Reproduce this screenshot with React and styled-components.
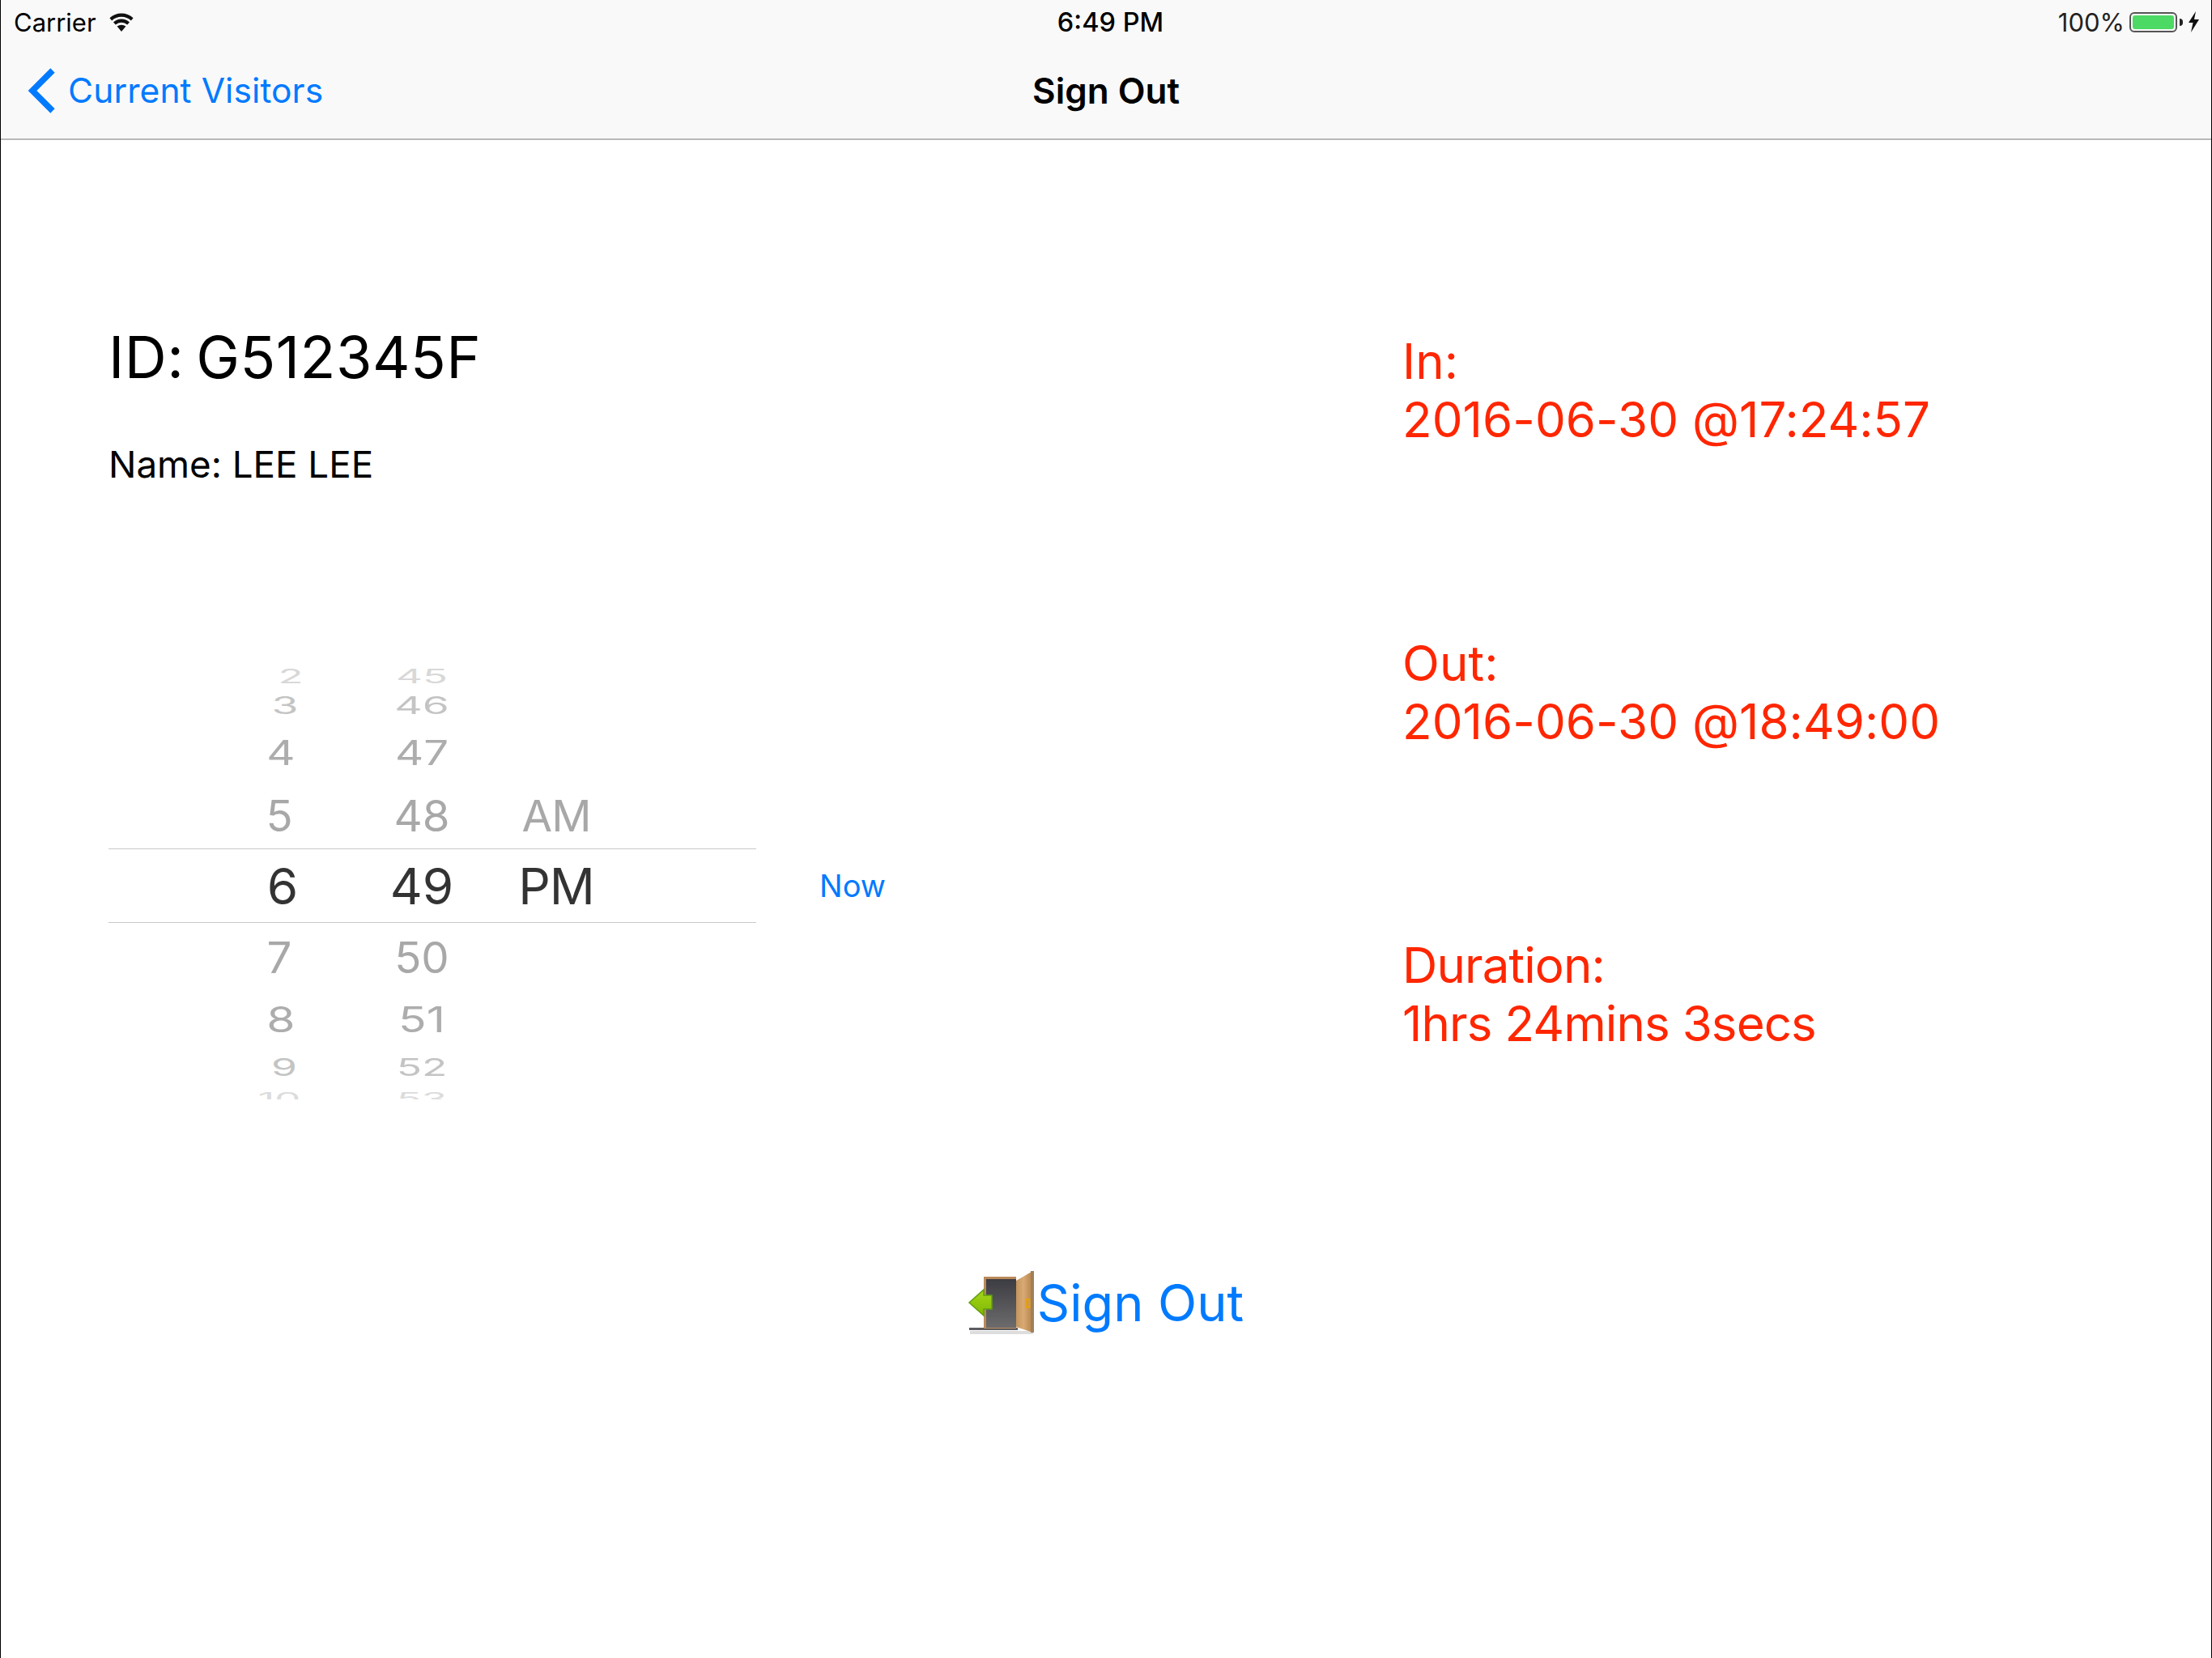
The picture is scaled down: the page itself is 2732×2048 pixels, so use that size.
import styled, { createGlobalStyle } from "styled-components";

const GlobalStyle = createGlobalStyle`
  html, body {
    margin: 0;
    padding: 0;
    background: #fff;
  }
  body {
    font-family: Inter, "Liberation Sans", sans-serif;
    color: #000;
  }
`;

const Screen = styled.div`
  width: 2732px;
  height: 2048px;
  box-sizing: border-box;
  border-left: 1px solid #000;
  border-right: 1px solid #000;
  overflow: hidden;
  background: #fff;
`;

const Header = styled.header`
  height: 171px;
  background: #f9f9f9;
  border-bottom: 2px solid #b8b8b8;
  box-sizing: content-box;
`;

const StatusBar = styled.div`
  height: 54px;
  padding: 0 14px 0 16px;
  display: grid;
  grid-template-columns: 1fr auto 1fr;
  align-items: center;
  font-size: 31px;
`;

const StatusLeft = styled.div`
  display: flex;
  align-items: center;
  gap: 15px;
`;

const StatusTime = styled.div`
  font-weight: 500;
  font-size: 32.5px;
  margin-left: 9px;
`;

const StatusRight = styled.div`
  display: flex;
  justify-content: flex-end;
  align-items: center;
  gap: 6px;
  color: #222;
`;

const Battery = styled.div`
  width: 59px;
  height: 25px;
  margin-right: 7px;
  box-sizing: border-box;
  border: 2px solid #555;
  border-radius: 6px;
  padding: 2px;
  position: relative;

  &::before {
    content: "";
    display: block;
    height: 100%;
    border-radius: 3px;
    background: #4cd964;
  }

  &::after {
    content: "";
    position: absolute;
    right: -9px;
    top: 6px;
    width: 4px;
    height: 9px;
    border-radius: 0 4px 4px 0;
    background: #222;
  }
`;

const NavBar = styled.nav`
  height: 115px;
  padding: 0 32px;
  display: grid;
  grid-template-columns: 1fr auto 1fr;
  align-items: center;
  font-size: 42.5px;
`;

const BackLink = styled.a`
  display: flex;
  align-items: center;
  gap: 15px;
  color: #007aff;
  letter-spacing: 0.1px;
`;

const NavTitle = styled.div`
  font-size: 44px;
  font-weight: 600;
`;

const Main = styled.main`
  display: grid;
  grid-template-columns: 1598px 1fr;
  padding-left: 133px;
`;

const LeftColumn = styled.section`
  padding-top: 228px;
`;

const IdLine = styled.h1`
  margin: 0;
  font-size: 72px;
  line-height: 80px;
  font-weight: 400;
  letter-spacing: 0.5px;
  word-spacing: -6px;
`;

const NameLine = styled.p`
  margin: 63px 0 0;
  font-size: 45.7px;
  line-height: 60px;
`;

const PickerRow = styled.div`
  display: flex;
  align-items: center;
  gap: 78px;
  margin-top: 222px;
`;

const Wheel = styled.div`
  width: 800px;
  height: 536px;
  overflow: hidden;
`;

const WheelRow = styled.div`
  height: ${(p) => p.$h}px;
  box-sizing: border-box;
  display: grid;
  grid-template-columns: 172px 172px 158px;
  grid-template-rows: minmax(0, 1fr);
  padding-left: 129px;
  align-items: center;
  overflow: hidden;
  color: ${(p) => p.$color};
  font-size: 62px;
  border-top: ${(p) => (p.$active ? "1px solid #c8c8c8" : "none")};
  border-bottom: ${(p) => (p.$active ? "1px solid #c8c8c8" : "none")};
`;

const WheelCell = styled.span`
  text-align: center;
  line-height: 1;
  white-space: nowrap;
  transform: translate(${(p) => p.$dx || 0}px, ${(p) => p.$dy || 0}px)
    scale(${(p) => p.$sx}, ${(p) => p.$sy});
`;

const PeriodCell = styled(WheelCell)`
  letter-spacing: -1px;
`;

const NowButton = styled.a`
  color: #007aff;
  font-size: 38px;
`;

const RightColumn = styled.section`
  padding-top: 237px;
  display: flex;
  flex-direction: column;
  gap: 229px;
`;

const TimeBlock = styled.div`
  color: #ff2600;
  font-size: 60px;
  line-height: 72px;
  letter-spacing: ${(p) => (p.$tight ? "-0.9px" : "0.05px")};
`;

const SignOutRow = styled.div`
  margin-top: 205px;
  display: flex;
  justify-content: center;
`;

const SignOutButton = styled.a`
  display: flex;
  align-items: center;
  gap: 1px;
  color: #007aff;
  font-size: 63px;
  line-height: 84px;
`;

const wheelRows = [
  { h: 25, sx: 0.82, sy: 0.38, dy: -3, color: "#d8d8d8", hour: "2", min: "45", hx: 10 },
  { h: 41, sx: 0.86, sy: 0.47, dy: 0, color: "#c4c4c4", hour: "3", min: "46", hx: 3 },
  { h: 75, sx: 0.88, sy: 0.69, dy: 0, color: "#adadad", hour: "4", min: "47", hx: -2 },
  { h: 81, sx: 0.88, sy: 0.86, dy: 0, color: "#a8a8a8", hour: "5", min: "48", ap: "AM", hx: -4 },
  { h: 92, sx: 1, sy: 1, dy: 1, color: "#333", hour: "6", min: "49", ap: "PM", hx: 0, active: true },
  { h: 85, sx: 0.88, sy: 0.86, dy: 0, color: "#a8a8a8", hour: "7", min: "50", hx: -4 },
  { h: 70, sx: 0.92, sy: 0.7, dy: 0, color: "#adadad", hour: "8", min: "51", hx: -2 },
  { h: 46, sx: 0.83, sy: 0.48, dy: 0, color: "#c4c4c4", hour: "9", min: "52", hx: 2 },
  { h: 17, sx: 0.82, sy: 0.34, dy: 8, color: "#dcdcdc", hour: "10", min: "53", hx: -4 },
];

const WifiIcon = () => (
  <svg width="32" height="24" viewBox="0 0 32 24">
    <path d="M16 24 L10.6 17.6 A8.4 8.4 0 0 1 21.4 17.6 Z" fill="#111" />
    <path
      d="M6 12.4 A14.6 14.6 0 0 1 26 12.4 L23.2 15.6 A10.6 10.6 0 0 0 8.8 15.6 Z"
      fill="#111"
    />
    <path
      d="M1.4 7.2 A21.6 21.6 0 0 1 30.6 7.2 L27.8 10.4 A17.4 17.4 0 0 0 4.2 10.4 Z"
      fill="#111"
    />
  </svg>
);

const BoltIcon = () => (
  <svg width="15" height="26" viewBox="0 0 15 26">
    <polygon points="10,0 1,14 6.5,14 4,26 14,10 8,10" fill="#111" />
  </svg>
);

const BackChevron = () => (
  <svg width="36" height="56" viewBox="0 0 36 56">
    <polyline
      points="32,3 7,28 32,53"
      fill="none"
      stroke="#007aff"
      strokeWidth="7.5"
    />
  </svg>
);

const DoorIcon = () => (
  <svg width="84" height="82" viewBox="0 0 84 82">
    <defs>
      <linearGradient id="doorGap" x1="0" y1="0" x2="0" y2="1">
        <stop offset="0" stopColor="#3c3c42" />
        <stop offset="1" stopColor="#6c6c6e" />
      </linearGradient>
      <linearGradient id="doorLeaf" x1="0" y1="0" x2="1" y2="0">
        <stop offset="0" stopColor="#c4945c" />
        <stop offset="0.5" stopColor="#d8aa74" />
        <stop offset="1" stopColor="#bd8a52" />
      </linearGradient>
      <linearGradient id="arrowFill" x1="0" y1="0" x2="0" y2="1">
        <stop offset="0" stopColor="#a6d61c" />
        <stop offset="1" stopColor="#7fb800" />
      </linearGradient>
      <filter id="soft" x="-5%" y="-5%" width="110%" height="110%">
        <feGaussianBlur stdDeviation="0.5" />
      </filter>
    </defs>
    <g filter="url(#soft)">
      <rect x="2" y="76" width="78" height="4" fill="#ddd" />
      <rect x="1" y="72" width="60" height="3" fill="#5c5c60" />
      <rect x="19" y="9" width="40" height="64" fill="#b98a5a" />
      <rect x="22" y="12" width="37" height="60" fill="url(#doorGap)" />
      <polygon points="59,14 77,3.5 77,77 59,71" fill="url(#doorLeaf)" />
      <rect x="77" y="2" width="4" height="76" fill="#a08058" />
      <rect x="71.5" y="37" width="4" height="10" fill="none" stroke="#e8a010" strokeWidth="2" />
      <polygon
        points="1,41 19,25 19,32 29,32 29,49 19,49 19,57"
        fill="url(#arrowFill)"
        stroke="#5f9e10"
        strokeWidth="1.5"
      />
    </g>
  </svg>
);

export default function App() {
  return (
    <Screen>
      <GlobalStyle />
      <Header>
        <StatusBar>
          <StatusLeft>
            Carrier
            <WifiIcon />
          </StatusLeft>
          <StatusTime>6:49 PM</StatusTime>
          <StatusRight>
            100%
            <Battery />
            <BoltIcon />
          </StatusRight>
        </StatusBar>
        <NavBar>
          <BackLink>
            <BackChevron />
            Current Visitors
          </BackLink>
          <NavTitle>Sign Out</NavTitle>
        </NavBar>
      </Header>
      <Main>
        <LeftColumn>
          <IdLine>ID: G512345F</IdLine>
          <NameLine>Name: LEE LEE</NameLine>
          <PickerRow>
            <Wheel>
              {wheelRows.map((r) => (
                <WheelRow key={r.hour} $h={r.h} $color={r.color} $active={r.active}>
                  <WheelCell $dx={r.hx} $dy={r.dy} $sx={r.sx} $sy={r.sy}>{r.hour}</WheelCell>
                  <WheelCell $dy={r.dy} $sx={r.sx} $sy={r.sy}>{r.min}</WheelCell>
                  {r.ap && <PeriodCell $dx={1} $dy={r.dy} $sx={r.sx} $sy={r.sy}>{r.ap}</PeriodCell>}
                </WheelRow>
              ))}
            </Wheel>
            <NowButton>Now</NowButton>
          </PickerRow>
        </LeftColumn>
        <RightColumn>
          <TimeBlock>In:<br />2016-06-30 @17:24:57</TimeBlock>
          <TimeBlock>Out:<br />2016-06-30 @18:49:00</TimeBlock>
          <TimeBlock $tight>Duration:<br />1hrs 24mins 3secs</TimeBlock>
        </RightColumn>
      </Main>
      <SignOutRow>
        <SignOutButton>
          <DoorIcon />
          Sign Out
        </SignOutButton>
      </SignOutRow>
    </Screen>
  );
}
